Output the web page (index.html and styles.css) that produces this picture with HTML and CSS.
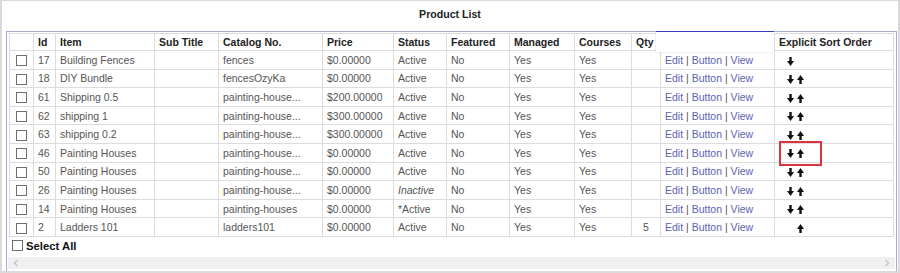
FILE: index.html
```html
<!DOCTYPE html>
<html lang="en">
<head>
  <meta charset="UTF-8">
  <title>Product List</title>
  <link rel="stylesheet" href="styles.css">
</head>
<body>

  <svg class="defs" width="0" height="0">
    <symbol id="arr-down" viewBox="0 0 7 9"><rect x="2.3" y="0" width="2.4" height="5"/><polygon points="0,4 7,4 3.5,9"/></symbol>
    <symbol id="arr-up" viewBox="0 0 7 9"><rect x="2.3" y="4" width="2.4" height="5"/><polygon points="0,5 7,5 3.5,0"/></symbol>
  </svg>

  <div class="frame">
    <div class="title">Product List</div>

    <div class="panel">
      <!-- tab over the actions column -->
      <div class="tab"></div>

      <table class="grid">
        <colgroup>
          <col style="width:24px"><col style="width:22px"><col style="width:99px"><col style="width:64px">
          <col style="width:104px"><col style="width:71px"><col style="width:53px"><col style="width:63px">
          <col style="width:65px"><col style="width:57px"><col style="width:29px"><col style="width:114px">
          <col style="width:119px">
        </colgroup>
        <thead>
          <tr>
            <th></th><th>Id</th><th>Item</th><th>Sub Title</th><th>Catalog No.</th><th>Price</th><th>Status</th>
            <th>Featured</th><th>Managed</th><th>Courses</th><th>Qty</th><th></th><th>Explicit Sort Order</th>
          </tr>
        </thead>
        <tbody>
          <tr>
            <td class="chk"><span class="cb"></span></td><td>17</td><td>Building Fences</td><td></td><td>fences</td>
            <td>$0.00000</td><td>Active</td><td>No</td><td>Yes</td><td>Yes</td><td class="qty"></td>
            <td class="acts"><a href="#">Edit</a> | <a href="#">Button</a> | <a href="#">View</a></td>
            <td class="order"><span class="sort"><svg class="arr"><use href="#arr-down"/></svg><i></i></span></td>
          </tr>
          <tr>
            <td class="chk"><span class="cb"></span></td><td>18</td><td>DIY Bundle</td><td></td><td>fencesOzyKa</td>
            <td>$0.00000</td><td>Active</td><td>No</td><td>Yes</td><td>Yes</td><td class="qty"></td>
            <td class="acts"><a href="#">Edit</a> | <a href="#">Button</a> | <a href="#">View</a></td>
            <td class="order"><span class="sort"><svg class="arr"><use href="#arr-down"/></svg><svg class="arr"><use href="#arr-up"/></svg></span></td>
          </tr>
          <tr>
            <td class="chk"><span class="cb"></span></td><td>61</td><td>Shipping 0.5</td><td></td><td>painting-house...</td>
            <td>$200.00000</td><td>Active</td><td>No</td><td>Yes</td><td>Yes</td><td class="qty"></td>
            <td class="acts"><a href="#">Edit</a> | <a href="#">Button</a> | <a href="#">View</a></td>
            <td class="order"><span class="sort"><svg class="arr"><use href="#arr-down"/></svg><svg class="arr"><use href="#arr-up"/></svg></span></td>
          </tr>
          <tr>
            <td class="chk"><span class="cb"></span></td><td>62</td><td>shipping 1</td><td></td><td>painting-house...</td>
            <td>$300.00000</td><td>Active</td><td>No</td><td>Yes</td><td>Yes</td><td class="qty"></td>
            <td class="acts"><a href="#">Edit</a> | <a href="#">Button</a> | <a href="#">View</a></td>
            <td class="order"><span class="sort"><svg class="arr"><use href="#arr-down"/></svg><svg class="arr"><use href="#arr-up"/></svg></span></td>
          </tr>
          <tr>
            <td class="chk"><span class="cb"></span></td><td>63</td><td>shipping 0.2</td><td></td><td>painting-house...</td>
            <td>$300.00000</td><td>Active</td><td>No</td><td>Yes</td><td>Yes</td><td class="qty"></td>
            <td class="acts"><a href="#">Edit</a> | <a href="#">Button</a> | <a href="#">View</a></td>
            <td class="order"><span class="sort"><svg class="arr"><use href="#arr-down"/></svg><svg class="arr"><use href="#arr-up"/></svg></span></td>
          </tr>
          <tr>
            <td class="chk"><span class="cb"></span></td><td>46</td><td>Painting Houses</td><td></td><td>painting-house...</td>
            <td>$0.00000</td><td>Active</td><td>No</td><td>Yes</td><td>Yes</td><td class="qty"></td>
            <td class="acts"><a href="#">Edit</a> | <a href="#">Button</a> | <a href="#">View</a></td>
            <td class="order"><span class="sort marked"><svg class="arr"><use href="#arr-down"/></svg><svg class="arr"><use href="#arr-up"/></svg></span></td>
          </tr>
          <tr>
            <td class="chk"><span class="cb"></span></td><td>50</td><td>Painting Houses</td><td></td><td>painting-house...</td>
            <td>$0.00000</td><td>Active</td><td>No</td><td>Yes</td><td>Yes</td><td class="qty"></td>
            <td class="acts"><a href="#">Edit</a> | <a href="#">Button</a> | <a href="#">View</a></td>
            <td class="order"><span class="sort"><svg class="arr"><use href="#arr-down"/></svg><svg class="arr"><use href="#arr-up"/></svg></span></td>
          </tr>
          <tr>
            <td class="chk"><span class="cb"></span></td><td>26</td><td>Painting Houses</td><td></td><td>painting-house...</td>
            <td>$0.00000</td><td class="inactive">Inactive</td><td>No</td><td>Yes</td><td>Yes</td><td class="qty"></td>
            <td class="acts"><a href="#">Edit</a> | <a href="#">Button</a> | <a href="#">View</a></td>
            <td class="order"><span class="sort"><svg class="arr"><use href="#arr-down"/></svg><svg class="arr"><use href="#arr-up"/></svg></span></td>
          </tr>
          <tr>
            <td class="chk"><span class="cb"></span></td><td>14</td><td>Painting Houses</td><td></td><td>painting-houses</td>
            <td>$0.00000</td><td>*Active</td><td>No</td><td>Yes</td><td>Yes</td><td class="qty"></td>
            <td class="acts"><a href="#">Edit</a> | <a href="#">Button</a> | <a href="#">View</a></td>
            <td class="order"><span class="sort"><svg class="arr"><use href="#arr-down"/></svg><svg class="arr"><use href="#arr-up"/></svg></span></td>
          </tr>
          <tr>
            <td class="chk"><span class="cb"></span></td><td>2</td><td>Ladders 101</td><td></td><td>ladders101</td>
            <td>$0.00000</td><td>Active</td><td>No</td><td>Yes</td><td>Yes</td><td class="qty">5</td>
            <td class="acts"><a href="#">Edit</a> | <a href="#">Button</a> | <a href="#">View</a></td>
            <td class="order"><span class="sort"><i></i><svg class="arr"><use href="#arr-up"/></svg></span></td>
          </tr>
        </tbody>
      </table>

      <div class="select-all"><span class="cb"></span>Select All</div>

      <div class="hscroll">
        <svg width="6" height="8" viewBox="0 0 6 8"><polyline points="4.5,1 1.5,4 4.5,7" fill="none" stroke="#c4c4c4" stroke-width="1.3"/></svg>
        <svg width="6" height="8" viewBox="0 0 6 8"><polyline points="1.5,1 4.5,4 1.5,7" fill="none" stroke="#c4c4c4" stroke-width="1.3"/></svg>
      </div>
    </div>
  </div>

</body>
</html>
```

FILE: styles.css
```css
* { box-sizing: border-box; }
html, body {
  margin: 0;
  background: #fff;
  font-family: "Liberation Sans", Arial, sans-serif;
  color: #555;
}
.defs {
  position: absolute;
  width: 0;
  height: 0;
}
.frame {
  width: 900px;
  height: 273px;
  border: 2px solid #dadada;
  border-top-width: 1px;
}
.title {
  height: 30px;
  padding-top: 7px;
  font-size: 10.6px;
  line-height: 12px;
  font-weight: 700;
  color: #222;
  text-align: center;
}
.panel {
  position: relative;
  height: 240px;
  margin-left: 4px;
  width: 891px;
  border: 1px solid #a6aecd;
  border-bottom: none;
  padding: 1px 1px 0 2px;
}
.tab {
  position: absolute;
  z-index: 2;
  left: 649px;
  top: -1px;
  width: 118px;
  height: 21px;
  background: #fff;
  border-top: 1px solid #3a3ac4;
  box-shadow: -1px 1px 1px rgba(0,0,0,0.05);
}
.grid {
  width: 884px;
  table-layout: fixed;
  border-collapse: collapse;
  font-size: 10.5px;
}
.grid th, .grid td {
  border: 1px solid #dcdcdc;
  padding: 0 4px;
  text-align: left;
  white-space: nowrap;
  overflow: hidden;
  vertical-align: middle;
}
.grid th {
  height: 17px;
  font-weight: 700;
  color: #222;
}
.grid td {
  height: 18.6px;
  color: #555;
}
.grid td.chk {
  padding: 0;
  text-align: center;
}
.grid td.qty {
  text-align: center;
}
.grid td.inactive {
  font-style: italic;
}
.grid td.order {
  overflow: visible;
}
.acts {
  color: #7a7fae;
}
.acts a {
  color: #5c62b2;
  text-decoration: none;
}
.cb {
  display: inline-block;
  width: 11px;
  height: 11px;
  border: 1px solid #6e6e6e;
  background: #fff;
  vertical-align: middle;
}
.sort {
  position: relative;
  display: inline-flex;
  gap: 3px;
  margin-left: 8px;
  vertical-align: middle;
}
.sort i {
  width: 7px;
}
.arr {
  width: 7px;
  height: 9px;
  fill: #111;
  display: block;
}
.sort.marked::after {
  content: "";
  position: absolute;
  z-index: 1;
  left: -8px;
  top: -8px;
  width: 39px;
  height: 21px;
  border: 2px solid #d8353c;
}
.select-all {
  height: 20px;
  display: flex;
  align-items: flex-start;
  gap: 3px;
  padding: 3px 0 0 3px;
  font-size: 11.3px;
  line-height: 12px;
  font-weight: 700;
  color: #111;
}
.hscroll {
  margin-left: -1px;
  height: 12px;
  background: #f0f0f0;
  display: flex;
  justify-content: space-between;
  align-items: center;
  padding: 0 5px;
}
```
